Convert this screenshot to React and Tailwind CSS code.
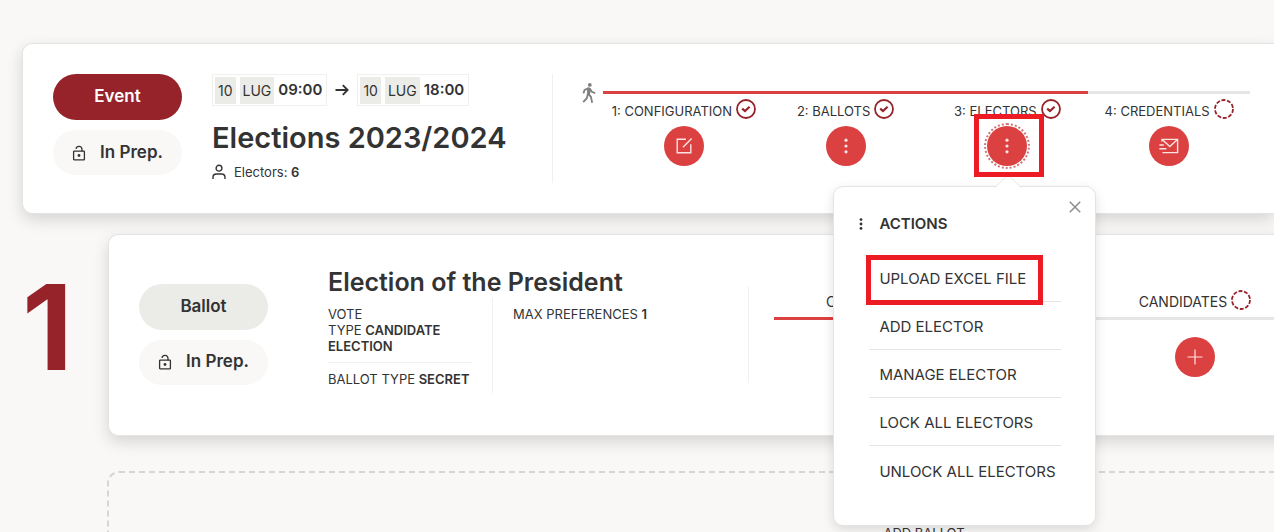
import React, { useState } from 'react';

const actions = [
  'UPLOAD EXCEL FILE',
  'ADD ELECTOR',
  'MANAGE ELECTOR',
  'LOCK ALL ELECTORS',
  'UNLOCK ALL ELECTORS',
];

const LockIcon = () => (
  <svg width="14" height="16" viewBox="0 0 14 16" fill="none" stroke="#333" strokeWidth="1.3">
    <rect x="1.6" y="6.2" width="10.8" height="8.6" rx="0.6" />
    <path d="M4 3.8a3.05 3.05 0 0 1 6 .4v2" />
    <circle cx="7" cy="10.5" r="1.4" fill="#333" stroke="none" />
  </svg>
);

const UserIcon = () => (
  <svg width="14" height="16" viewBox="0 0 14 16" fill="none" stroke="#333" strokeWidth="1.4">
    <circle cx="7" cy="4.2" r="2.9" />
    <path d="M1 15v-1.6A3.4 3.4 0 0 1 4.4 10h5.2a3.4 3.4 0 0 1 3.4 3.4V15" />
  </svg>
);

const WalkIcon = () => (
  <svg
    className="mt-[9px] mr-[7px] shrink-0"
    width="14"
    height="20"
    viewBox="0 0 14 20"
    fill="none"
    stroke="#808080"
    strokeWidth="1.8"
  >
    <circle cx="7.8" cy="1.9" r="1.9" fill="#808080" stroke="none" />
    <path d="M5.2 4.6h2.6l1 2.2-.8 5-3-.4z" fill="#808080" stroke="none" />
    <path d="M6.4 5.4 2.6 7 1.4 10.4M7.8 5.6l2 3.2 3.4 1.4" />
    <path d="M6 10.6l2.9 3.2 1.3 6M5.8 11l-1 4.2-3.6 4" />
  </svg>
);

const ArrowIcon = () => (
  <svg width="14" height="12" viewBox="0 0 14 12" fill="none" stroke="#333" strokeWidth="1.9">
    <path d="M.5 6h11.8M7.8 1.2 12.6 6l-4.8 4.8" />
  </svg>
);

const DotsIcon = () => (
  <svg width="4" height="16" viewBox="0 0 4 16" fill="currentColor">
    <circle cx="2" cy="2.2" r="1.6" />
    <circle cx="2" cy="8" r="1.6" />
    <circle cx="2" cy="13.8" r="1.6" />
  </svg>
);

const SmallDotsIcon = () => (
  <svg width="4" height="12" viewBox="0 0 4 12" fill="currentColor">
    <circle cx="2" cy="1.6" r="1.4" />
    <circle cx="2" cy="6" r="1.4" />
    <circle cx="2" cy="10.4" r="1.4" />
  </svg>
);

const EditIcon = () => (
  <svg width="18" height="18" viewBox="0 0 18 18" fill="none" stroke="currentColor" strokeWidth="1.4">
    <path d="M11 2.2H2.2v13.6h13.6V7.2M8 10.2l8.6-8.8" />
  </svg>
);

const SendIcon = () => (
  <svg width="20" height="18" viewBox="0 0 20 18" fill="none" stroke="currentColor" strokeWidth="1.4">
    <path d="M3 4.6V2.4h15.6v13.2H3.4M3.2 2.6l7.6 7 7.6-7M.4 8h4.4M.4 11.8h7" />
  </svg>
);

const PlusIcon = () => (
  <svg width="16" height="16" viewBox="0 0 16 16" fill="none" stroke="currentColor" strokeWidth="1.2">
    <path d="M8 .5v15M.5 8h15" />
  </svg>
);

const CloseIcon = () => (
  <svg width="12" height="12" viewBox="0 0 12 12" fill="none" stroke="#8c8c8c" strokeWidth="1.5">
    <path d="m.8.8 10.4 10.4M11.2.8.8 11.2" />
  </svg>
);

const StatusIcon = ({ done }) => (
  <svg width="20" height="20" viewBox="0 0 20 20" fill="none" stroke="#96232a">
    {done ? (
      <>
        <circle cx="10" cy="10" r="9" strokeWidth="1.8" />
        <path d="m6.2 9.6 2.8 2.4 4.6-4.2" strokeWidth="2.2" />
      </>
    ) : (
      <circle cx="10" cy="10" r="9" strokeWidth="1.8" strokeDasharray="4 1.655" />
    )}
  </svg>
);

const RoundButton = ({ label, children, ...rest }) => (
  <button
    aria-label={label}
    className="flex size-10 items-center justify-center rounded-full bg-[#db4141] text-[#fbe3e3]"
    {...rest}
  >
    {children}
  </button>
);

const StatusPills = ({ label, className }) => (
  <div className="flex w-[129px] shrink-0 flex-col gap-2.5 text-[17px] font-semibold">
    <div className={`flex h-[46px] items-center justify-center rounded-full ${className}`}>{label}</div>
    <div className="flex h-[45px] items-center justify-center gap-3.5 rounded-full bg-[#f9f8f6]">
      <LockIcon />
      In Prep.
    </div>
  </div>
);

const DateBox = ({ day, month, time }) => (
  <div className="flex h-8 items-center gap-1 border border-[#f0f0ef] px-0.5">
    <span className="bg-[#ebece7] px-[3px] text-sm leading-[27px]">{day}</span>
    <span className="bg-[#ebece7] px-[3px] text-sm leading-[27px]">{month}</span>
    <time className="pr-0.5 text-[15px] font-semibold">{time}</time>
  </div>
);

const StepLabel = ({ text, done, className = 'text-[13px]' }) => (
  <div className={`flex h-5 items-end gap-1 ${className}`}>
    <span className="leading-4 whitespace-nowrap">{text}</span>
    <StatusIcon done={done} />
  </div>
);

const ActionsMenu = ({ onClose }) => (
  <div className="absolute top-[60px] -left-[154px] z-10 w-[263px] rounded-[10px] border border-[#e4e4e2] bg-white pt-[22px] pr-[34px] pb-[31px] pl-[35px] shadow-[0_4px_12px_rgba(0,0,0,0.12)]">
    <svg className="absolute -top-[13px] left-[160px]" width="28" height="14" viewBox="0 0 28 14">
      <path d="M1 13.5 14 .8l13 12.7" fill="#fff" stroke="#e4e4e2" />
    </svg>
    <button aria-label="Close" onClick={onClose} className="absolute top-[14px] right-[14px]">
      <CloseIcon />
    </button>
    <div className="-ml-2.5 flex h-[30px] items-center gap-4 text-[15px] font-semibold">
      <SmallDotsIcon />
      ACTIONS
    </div>
    <ul className="mt-[15px] divide-y divide-[#e4e4e4]">
      {actions.map((action, i) => (
        <li key={action} className="relative h-12">
          <button className="h-full w-full pt-1 pl-2.5 text-left text-[15px] whitespace-nowrap">{action}</button>
          {i === 0 && (
            <div className="pointer-events-none absolute top-px -left-[3px] h-[50px] w-[177px] border-5 border-[#ed1c24]" />
          )}
        </li>
      ))}
    </ul>
  </div>
);

const EventCard = () => {
  const [menuOpen, setMenuOpen] = useState(true);

  return (
    <section className="relative z-10 flex rounded-l-[10px] border border-r-0 border-[#e4e4e2] bg-white py-[30px] pr-6 pl-[30px] shadow-[0_6px_16px_rgba(0,0,0,0.14)]">
      <StatusPills label="Event" className="bg-[#96232a] text-white" />

      <div className="ml-[30px] w-[340px] shrink-0">
        <div className="flex items-center gap-2">
          <DateBox day="10" month="LUG" time="09:00" />
          <ArrowIcon />
          <DateBox day="10" month="LUG" time="18:00" />
        </div>
        <h1 className="mt-3 text-[29px] leading-10 font-semibold">Elections 2023/2024</h1>
        <p className="mt-1 flex items-center gap-2 text-[13px] leading-5">
          <UserIcon />
          <span>
            Electors: <b className="font-semibold">6</b>
          </span>
        </p>
      </div>

      <div className="flex h-[109px] flex-1 border-l border-[#f0f0ef] pl-[29px]">
        <WalkIcon />
        <div className="mt-[17px] flex-1">
          <div className="h-[3px] bg-[#e6e6e6]">
            <div className="h-full w-3/4 bg-[#db4141]" />
          </div>
          <div className="mt-[5px] grid grid-cols-4 justify-items-center">
            <div className="flex flex-col items-center gap-[7px]">
              <StepLabel text="1: CONFIGURATION" done />
              <RoundButton label="Edit configuration"><EditIcon /></RoundButton>
            </div>
            <div className="flex flex-col items-center gap-[7px]">
              <StepLabel text="2: BALLOTS" done />
              <RoundButton label="Ballot actions"><DotsIcon /></RoundButton>
            </div>
            <div className="flex flex-col items-center gap-[7px]">
              <StepLabel text="3: ELECTORS" done />
              <div className="relative">
                <RoundButton label="Elector actions" onClick={() => setMenuOpen(!menuOpen)}>
                  <DotsIcon />
                </RoundButton>
                <div className="pointer-events-none absolute -inset-[3px] rounded-full border-2 border-dotted border-[#cf7377]" />
                {menuOpen && <ActionsMenu onClose={() => setMenuOpen(false)} />}
                <div className="pointer-events-none absolute -top-3 -left-[13px] z-20 h-[63px] w-[70px] border-5 border-[#ed1c24]" />
              </div>
            </div>
            <div className="flex flex-col items-center gap-[7px]">
              <StepLabel text="4: CREDENTIALS" />
              <RoundButton label="Send credentials"><SendIcon /></RoundButton>
            </div>
          </div>
        </div>
      </div>
    </section>
  );
};

const BallotCard = () => (
  <section className="flex min-h-[202px] flex-1 items-center rounded-l-[10px] border border-r-0 border-[#e4e4e2] bg-white pb-0.5 pl-[30px] shadow-[0_6px_16px_rgba(0,0,0,0.14)]">
    <StatusPills label="Ballot" className="bg-[#ebece7]" />

    <div className="ml-[60px] w-[420px] shrink-0 pb-2.5">
      <h2 className="text-[25px] leading-8 font-semibold">Election of the President</h2>
      <div className="flex h-[95px] text-[13px] leading-4">
        <div className="w-[165px] border-r border-[#f0f0ef] pt-2 pr-5">
          <p className="border-b border-[#f0f0ef] pb-2">
            VOTE
            <br />
            TYPE <b className="font-semibold">CANDIDATE ELECTION</b>
          </p>
          <p className="pt-2 whitespace-nowrap">
            BALLOT TYPE <b className="font-semibold">SECRET</b>
          </p>
        </div>
        <p className="pt-2 pl-5">
          MAX PREFERENCES <b className="font-semibold">1</b>
        </p>
      </div>
    </div>

    <div className="flex h-[97px] shrink-0 border-l border-[#f0f0ef] pt-1 pl-[25px]">
      <div>
        <div className="grid grid-cols-[244px_354px] justify-items-center">
          <StepLabel text="CONFIGURATION" done className="text-sm" />
          <StepLabel text="CANDIDATES" className="text-sm" />
        </div>
        <div className="mt-[7px] h-[3px] bg-[#e6e6e6]">
          <div className="h-full w-[244px] bg-[#db4141]" />
        </div>
        <div className="mt-[17px] grid grid-cols-[244px_354px] justify-items-center">
          <RoundButton label="Edit ballot"><EditIcon /></RoundButton>
          <RoundButton label="Add candidates"><PlusIcon /></RoundButton>
        </div>
      </div>
    </div>
  </section>
);

const App = () => (
  <main className="h-screen overflow-hidden bg-[#f9f8f6] pt-[43px] pl-[22px] font-['Inter',sans-serif] text-[#333]">
    <EventCard />

    <div className="mt-5 flex">
      <div className="flex w-[86px] shrink-0 items-center pb-4 text-[118px] leading-none font-bold text-[#96232a]">
        1
      </div>
      <BallotCard />
    </div>

    <div className="mt-[35px] ml-[85px] flex h-[120px] min-w-[1634px] justify-center rounded-xl border-2 border-dashed border-[#d6d6d4] pt-[51px]">
      <button className="h-5 text-[13px]">ADD BALLOT</button>
    </div>
  </main>
);

export default App;
